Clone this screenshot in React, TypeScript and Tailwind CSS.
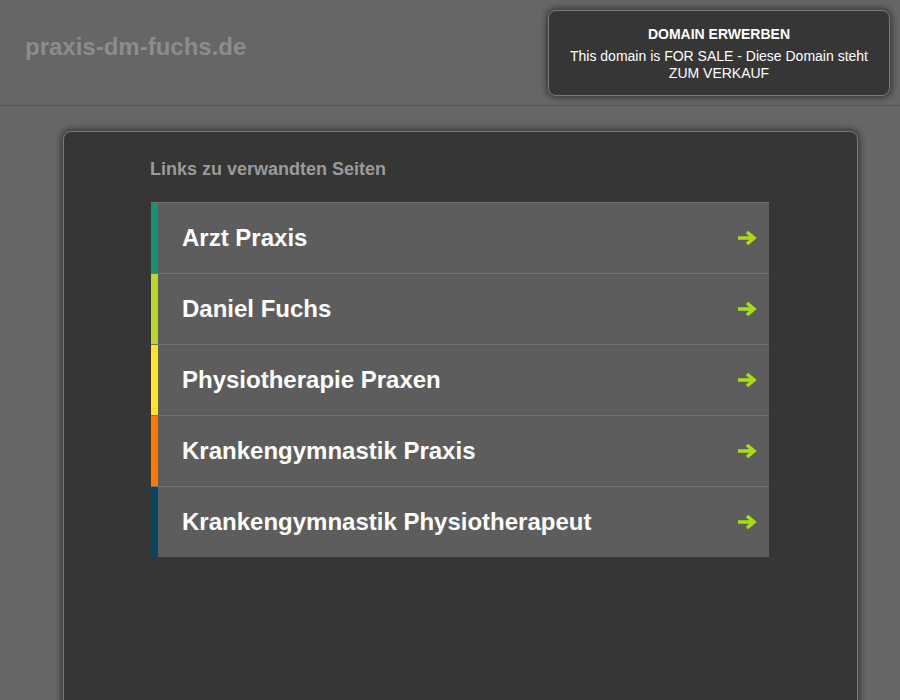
import React from 'react'

/* Related links, each with its coloured stripe */
const links = [
  { label: 'Arzt Praxis', stripe: 'bg-[#1f8f73]' },
  { label: 'Daniel Fuchs', stripe: 'bg-[#b8d531]' },
  { label: 'Physiotherapie Praxen', stripe: 'bg-[#fde22a]' },
  { label: 'Krankengymnastik Praxis', stripe: 'bg-[#ff7800]' },
  { label: 'Krankengymnastik Physiotherapeut', stripe: 'bg-[#0b4660]' },
]

function Arrow() {
  return (
    <svg width="20" height="16" viewBox="0 0 20 16" className="shrink-0">
      <path d="M1 8 H15" stroke="#a8dc18" strokeWidth="3.6" fill="none" />
      <path d="M10 2 L17 8 L10 14" stroke="#a8dc18" strokeWidth="3.6" fill="none" strokeLinejoin="miter" />
    </svg>
  )
}

function LinkRow({ label, stripe }: { label: string; stripe: string }) {
  return (
    <a href="#" className="flex h-[71px] border-t border-[#717171] bg-[#5d5d5d] no-underline">
      <div className={`w-[7px] shrink-0 ${stripe}`} />
      <div className="flex flex-1 items-center justify-between pl-[24px] pr-[12px]">
        <span className="text-[24px] font-bold text-white">{label}</span>
        <Arrow />
      </div>
    </a>
  )
}

export default function App() {
  return (
    <div className="h-[700px] overflow-hidden bg-[#666666] font-['Liberation_Sans',Arial,sans-serif]">
      {/* Header */}
      <header className="flex h-[106px] items-start justify-between border-b border-[#555555] pl-[25px] pr-[10px] pt-[10px]">
        <h1 className="mt-[19px] text-[24px] font-bold text-[#8c8c8c]">praxis-dm-fuchs.de</h1>
        <div className="flex h-[86px] w-[342px] flex-col items-center justify-center rounded-[8px] border border-[#7a7a7a] bg-[#363636] pt-[2px] text-center text-[14px] leading-[17px] text-white shadow-[0_0_6px_2px_rgba(0,0,0,0.45)]">
          <div className="font-bold">DOMAIN ERWERBEN</div>
          <div className="mt-[5px] px-[20px]">This domain is FOR SALE - Diese Domain steht ZUM VERKAUF</div>
        </div>
      </header>

      {/* Main panel */}
      <main className="ml-[63px] mt-[25px] h-[600px] w-[795px] rounded-[8px] border border-[#7a7a7a] bg-[#363636] px-[86px] pt-[24px] shadow-[0_0_6px_2px_rgba(0,0,0,0.45)]">
        <h2 className="text-[18px] font-bold text-[#9a9a9a]">Links zu verwandten Seiten</h2>
        <div className="ml-[1px] mt-[19px] flex w-[618px] flex-col">
          {links.map((l) => (
            <LinkRow key={l.label} label={l.label} stripe={l.stripe} />
          ))}
        </div>
      </main>
    </div>
  )
}
